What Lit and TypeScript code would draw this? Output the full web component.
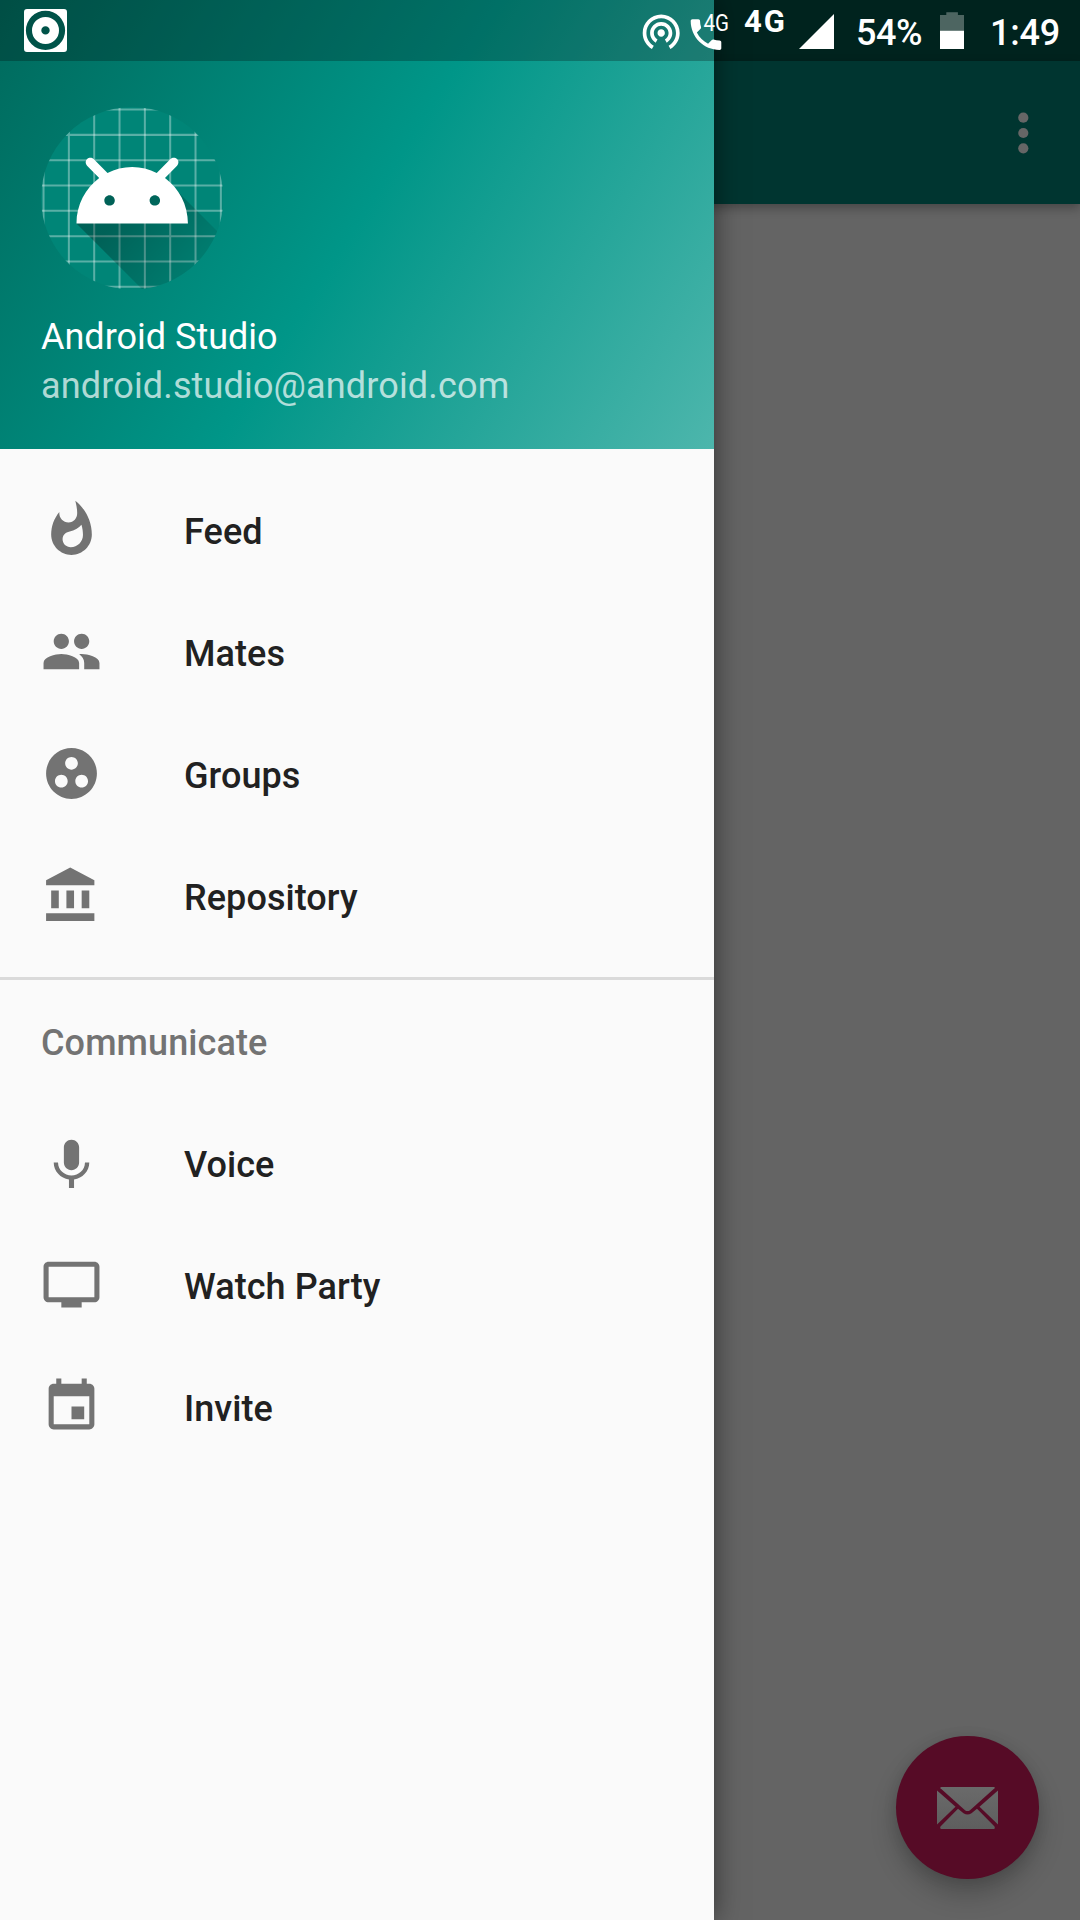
import { LitElement, html, css, svg } from "lit";
import { customElement, property } from "lit/decorators.js";

const ICONS: Record<string, string> = {
  feed: "M13.5.67s.74 2.65.74 4.8c0 2.06-1.35 3.73-3.41 3.73-2.07 0-3.63-1.67-3.63-3.73l.03-.36C5.21 7.51 4 10.62 4 14c0 4.42 3.58 8 8 8s8-3.58 8-8C20 8.61 17.41 3.8 13.5.67zM11.71 19c-1.78 0-3.22-1.4-3.22-3.14 0-1.62 1.05-2.76 2.81-3.12 1.77-.36 3.6-1.21 4.62-2.58.39 1.29.59 2.65.59 4.04 0 2.65-2.15 4.8-4.8 4.8z",
  mates: "M16 11c1.66 0 2.99-1.34 2.99-3S17.66 5 16 5c-1.66 0-3 1.34-3 3s1.34 3 3 3zm-8 0c1.66 0 2.99-1.34 2.99-3S9.66 5 8 5C6.34 5 5 6.34 5 8s1.34 3 3 3zm0 2c-2.33 0-7 1.17-7 3.5V19h14v-2.5c0-2.33-4.67-3.5-7-3.5zm8 0c-.29 0-.62.02-.97.05 1.16.84 1.97 1.97 1.97 3.45V19h6v-2.5c0-2.33-4.67-3.5-7-3.5z",
  groups: "M12 2C6.48 2 2 6.48 2 12s4.48 10 10 10 10-4.48 10-10S17.52 2 12 2zM8 17.5c-1.38 0-2.5-1.12-2.5-2.5s1.12-2.5 2.5-2.5 2.5 1.12 2.5 2.5-1.12 2.5-2.5 2.5zM9.5 8c0-1.38 1.12-2.5 2.5-2.5s2.5 1.12 2.5 2.5-1.12 2.5-2.5 2.5S9.5 9.38 9.5 8zm6.5 9.5c-1.38 0-2.5-1.12-2.5-2.5s1.12-2.5 2.5-2.5 2.5 1.12 2.5 2.5-1.12 2.5-2.5 2.5z",
  repository: "M4 10v7h3v-7H4zm6 0v7h3v-7h-3zM2 22h19v-3H2v3zm14-12v7h3v-7h-3zm-4.5-9L2 6v2h19V6l-9.5-5z",
  voice: "M12 15c1.66 0 2.99-1.34 2.99-3L15 6c0-1.66-1.34-3-3-3S9 4.34 9 6v6c0 1.66 1.34 3 3 3zm5.3-3c0 3-2.54 5.1-5.3 5.1S6.7 15 6.7 12H5c0 3.42 2.72 6.23 6 6.72V22h2v-3.28c3.28-.48 6-3.3 6-6.72h-1.7z",
  watch: "M21 3H3c-1.11 0-2 .89-2 2v12c0 1.1.89 2 2 2h5v2h8v-2h5c1.1 0 1.99-.9 1.99-2L23 5c0-1.11-.9-2-2-2zm0 14H3V5h18v12z",
  invite: "M17 12h-5v5h5v-5zM16 1v2H8V1H6v2H5c-1.11 0-1.99.9-1.99 2L3 19c0 1.1.89 2 2 2h14c1.1 0 2-.9 2-2V5c0-1.1-.9-2-2-2h-1V1h-2zm3 18H5V8h14v11z",
  tether: "M12 11c-1.1 0-2 .9-2 2s.9 2 2 2 2-.9 2-2-.9-2-2-2zm6 2c0-3.31-2.69-6-6-6s-6 2.69-6 6c0 2.22 1.21 4.15 3 5.19l1-1.74c-1.19-.7-2-1.97-2-3.45 0-2.21 1.79-4 4-4s4 1.79 4 4c0 1.48-.81 2.75-2 3.45l1 1.74c1.79-1.04 3-2.97 3-5.19zM12 3C6.48 3 2 7.48 2 13c0 3.7 2.01 6.92 4.99 8.65l1-1.73C5.61 18.53 4 15.96 4 13c0-4.42 3.58-8 8-8s8 3.58 8 8c0 2.96-1.61 5.53-4 6.92l1 1.73c2.99-1.73 5-4.95 5-8.65 0-5.52-4.48-10-10-10z",
  phone: "M6.62 10.79c1.44 2.83 3.76 5.14 6.59 6.59l2.2-2.2c.27-.27.67-.36 1.02-.24 1.12.37 2.33.57 3.57.57.55 0 1 .45 1 1V20c0 .55-.45 1-1 1-9.39 0-17-7.61-17-17 0-.55.45-1 1-1h3.5c.55 0 1 .45 1 1 0 1.25.2 2.45.57 3.57.11.35.03.74-.25 1.02l-2.2 2.2z",
};

@customElement("nav-item")
class NavItem extends LitElement {
  @property() icon = "";
  @property() label = "";

  static styles = css`
    :host {
      display: flex;
      align-items: center;
      gap: 82px;
      height: 122px;
      padding-left: 41px;
      color: #212121;
      font-size: 36px;
      font-weight: 500;
      letter-spacing: 0.07px;
    }
    .icon {
      width: 61px;
      height: 61px;
      margin-bottom: 2px;
      fill: #737373;
      flex: none;
    }
    .label {
      line-height: 42px;
      padding-top: 4px;
    }
  `;

  render() {
    return html`
      <svg class="icon" viewBox="0 0 24 24"><path d=${ICONS[this.icon]} /></svg>
      <span class="label">${this.label}</span>
    `;
  }
}

@customElement("user-avatar")
class UserAvatar extends LitElement {
  static styles = css`
    :host {
      display: block;
      width: 182.4px;
      height: 182.4px;
    }
    .art {
      display: block;
      width: 100%;
      height: 100%;
    }
  `;

  render() {
    const lines = [19, 29, 39, 49, 59, 69, 79, 89];
    return html`
      <svg class="art" viewBox="18 18 72 72">
        <defs>
          <clipPath id="disc"><circle cx="54" cy="54" r="36" /></clipPath>
          <linearGradient id="shade" gradientUnits="userSpaceOnUse" x1="48.77" y1="61.09" x2="85.85" y2="92.5">
            <stop offset="0" stop-color="#000" stop-opacity=".267" />
            <stop offset="1" stop-color="#000" stop-opacity="0" />
          </linearGradient>
        </defs>
        <g clip-path="url(#disc)">
          <rect x="18" y="18" width="72" height="72" fill="#008577" />
          ${lines.map(
            (n) => svg`<path d="M${n} 18v72M18 ${n}h72" stroke="#fff" stroke-opacity=".35" stroke-width=".8" />`
          )}
          <path
            fill="url(#shade)"
            d="M32,64C32,64 38.39,52.99 44.13,50.95C51.37,48.37 70.14,49.57 70.14,49.57L108.26,87.69L108,109.01L75.97,107.97L32,64Z"
          />
          <path
            fill="#fff"
            fill-rule="evenodd"
            d="M66.94,46.02C72.44,50.07 76,56.61 76,64L32,64C32,56.61 35.56,50.11 40.98,46.06L36.18,41.19C35.45,40.45 35.45,39.3 36.18,38.56C36.91,37.81 38.05,37.81 38.78,38.56L44.25,44.05C47.18,42.57 50.48,41.71 54,41.71C57.48,41.71 60.78,42.57 63.68,44.05L69.11,38.56C69.84,37.81 70.98,37.81 71.71,38.56C72.44,39.3 72.44,40.45 71.71,41.19L66.94,46.02ZM62.94,56.92C64.08,56.92 65,56.01 65,54.88C65,53.76 64.08,52.85 62.94,52.85C61.8,52.85 60.88,53.76 60.88,54.88C60.88,56.01 61.8,56.92 62.94,56.92ZM45.06,56.92C46.2,56.92 47.13,56.01 47.13,54.88C47.13,53.76 46.2,52.85 45.06,52.85C43.92,52.85 43,53.76 43,54.88C43,56.01 43.92,56.92 45.06,56.92Z"
          />
        </g>
      </svg>
    `;
  }
}

@customElement("status-bar")
class StatusBar extends LitElement {
  static styles = css`
    :host {
      display: flex;
      align-items: flex-start;
      height: 61px;
      color: #fff;
      font-weight: 500;
    }
    svg {
      display: block;
      flex: none;
      fill: #fff;
    }
    .disc {
      width: 43px;
      height: 43px;
      margin: 9px auto 0 24px;
    }
    .tether {
      width: 44.4px;
      height: 44.4px;
      margin-top: 9px;
    }
    .call {
      width: 52px;
      height: 52px;
      margin-left: 2px;
    }
    .small {
      font-size: 23.5px;
      font-weight: 400;
    }
    .net {
      width: 42px;
      margin: 4px 0 0 6.5px;
      font-size: 31px;
      font-weight: 700;
      line-height: 36px;
      letter-spacing: 2px;
    }
    .signal {
      width: 35px;
      height: 35px;
      margin: 14px 0 0 13px;
    }
    .text {
      font-size: 36px;
      line-height: 42px;
      margin-top: 12px;
      white-space: nowrap;
    }
    .percent {
      width: 68px;
      margin-left: 22px;
      letter-spacing: -0.4px;
    }
    .battery {
      width: 24px;
      height: 37px;
      margin: 12px 0 0 16px;
    }
    .clock {
      width: 90px;
      margin-left: 26px;
      letter-spacing: -0.2px;
    }
  `;

  render() {
    return html`
      <svg class="disc" viewBox="0 0 43 43">
        <path
          fill-rule="evenodd"
          d="M3 0h37a3 3 0 0 1 3 3v37a3 3 0 0 1-3 3H3a3 3 0 0 1-3-3V3a3 3 0 0 1 3-3zM21.5 1.8a19.6 19.6 0 1 0 0 39.2a19.6 19.6 0 1 0 0-39.2z"
        />
        <path
          fill-rule="evenodd"
          d="M21.5 7.9a13.5 13.5 0 1 0 0 27a13.5 13.5 0 1 0 0-27zM21.5 17.2a4.2 4.2 0 1 1 0 8.4a4.2 4.2 0 1 1 0-8.4z"
        />
      </svg>
      <svg class="tether" viewBox="0 0 24 24"><path d=${ICONS.tether} /></svg>
      <svg class="call" viewBox="0 0 52 52">
        <path transform="translate(-.4 14.2) scale(1.7)" d=${ICONS.phone} />
        <text class="small" x="17.5" y="31" textLength="25.5" lengthAdjust="spacingAndGlyphs">4G</text>
      </svg>
      <span class="net">4G</span>
      <svg class="signal" viewBox="0 0 35 35"><path d="M0 35L35 0V35z" /></svg>
      <span class="text percent">54%</span>
      <svg class="battery" viewBox="0 0 24 37">
        <path fill-opacity=".3" d="M6.3 .3h11.6v2.7H24v15.7H0V3h6.3z" />
        <path d="M0 18.7h24V37H0z" />
      </svg>
      <span class="text clock">1:49</span>
    `;
  }
}

@customElement("app-root")
class AppRoot extends LitElement {
  static styles = css`
    :host {
      display: block;
      position: relative;
      width: 1080px;
      height: 1920px;
      overflow: hidden;
      background: #646464;
      font-family: Roboto, "Liberation Sans", sans-serif;
    }
    .screen {
      display: flex;
      flex-direction: column;
      height: 100%;
    }
    .inset {
      height: 61px;
      background: #00231e;
    }
    .toolbar {
      display: flex;
      align-items: center;
      justify-content: flex-end;
      height: 143px;
      padding-right: 51px;
      background: #003530;
      box-shadow: 0 4px 10px rgba(0, 0, 0, 0.3);
    }
    .more {
      width: 11px;
      height: 42px;
      fill: #666;
    }
    .fab {
      position: absolute;
      right: 41px;
      bottom: 41px;
      display: grid;
      place-items: center;
      width: 143px;
      height: 143px;
      border-radius: 50%;
      background: #560b26;
      box-shadow: 0 15px 26px rgba(0, 0, 0, 0.22), 0 2px 14px rgba(0, 0, 0, 0.1);
    }
    .mail {
      width: 61px;
      height: 42px;
    }
    .drawer {
      position: absolute;
      top: 0;
      left: 0;
      width: 714px;
      height: 100%;
      background: #fafafa;
      box-shadow: 0 0 26px rgba(0, 0, 0, 0.5);
    }
    .header {
      box-sizing: border-box;
      height: 449px;
      padding: 106.6px 0 0 41px;
      background: linear-gradient(122.17deg, #00695c, #009688 50%, #4db6ac);
      color: #fff;
      font-size: 36px;
      line-height: 42px;
    }
    .name {
      margin-top: 27px;
    }
    .email {
      margin-top: 7px;
      letter-spacing: 0.15px;
      color: rgba(255, 255, 255, 0.7);
    }
    .list {
      padding: 20px 0;
    }
    .divider {
      height: 3px;
      background: #dadada;
    }
    .subheader {
      box-sizing: border-box;
      height: 122px;
      padding: 42px 0 0 41px;
      color: #737373;
      font-size: 36px;
      font-weight: 500;
      line-height: 42px;
      letter-spacing: 0.1px;
    }
    .tint {
      position: absolute;
      top: 0;
      left: 0;
      width: 714px;
      height: 61px;
      background: rgba(0, 0, 0, 0.25);
    }
    .status {
      position: absolute;
      top: 0;
      left: 0;
      width: 100%;
    }
  `;

  render() {
    const main = [
      ["feed", "Feed"],
      ["mates", "Mates"],
      ["groups", "Groups"],
      ["repository", "Repository"],
    ];
    const communicate = [
      ["voice", "Voice"],
      ["watch", "Watch Party"],
      ["invite", "Invite"],
    ];
    const item = ([icon, label]: string[]) => html`<nav-item .icon=${icon} .label=${label}></nav-item>`;

    return html`
      <div class="screen">
        <div class="inset"></div>
        <div class="toolbar">
          <svg class="more" viewBox="0 0 11 42">
            <circle cx="5.3" cy="5.7" r="5.1" />
            <circle cx="5.3" cy="21" r="5.1" />
            <circle cx="5.3" cy="36.3" r="5.1" />
          </svg>
        </div>
        <div class="fab">
          <svg class="mail" viewBox="0 0 61 42">
            <defs>
              <linearGradient id="paper" x1="0" y1="0" x2="0" y2="42" gradientUnits="userSpaceOnUse">
                <stop offset="0" stop-color="#6a6a6a" />
                <stop offset="1" stop-color="#5e5e5e" />
              </linearGradient>
            </defs>
            <g fill="url(#paper)">
              <path d="M4.5 0H57Q58.5 .2 57.5 1.2L33 23.2Q30.5 25 28 23.2L3.5 1.2Q2.5 .2 4.5 0z" />
              <path d="M0 3.5L18.5 19.8L0 37.5z" />
              <path d="M61 3.5L42.5 19.8L61 37.5z" />
              <path d="M21 21.8L26.5 26.2Q30.5 28.8 34.5 26.2L40 21.8L57.5 39.5Q58.5 41.5 57 42H4.5Q2.5 41.5 3.5 39.5z" />
            </g>
          </svg>
        </div>
      </div>
      <div class="drawer">
        <div class="header">
          <user-avatar></user-avatar>
          <div class="name">Android Studio</div>
          <div class="email">android.studio@android.com</div>
        </div>
        <div class="list">${main.map(item)}</div>
        <div class="divider"></div>
        <div class="subheader">Communicate</div>
        ${communicate.map(item)}
        <div class="tint"></div>
      </div>
      <status-bar class="status"></status-bar>
    `;
  }
}
